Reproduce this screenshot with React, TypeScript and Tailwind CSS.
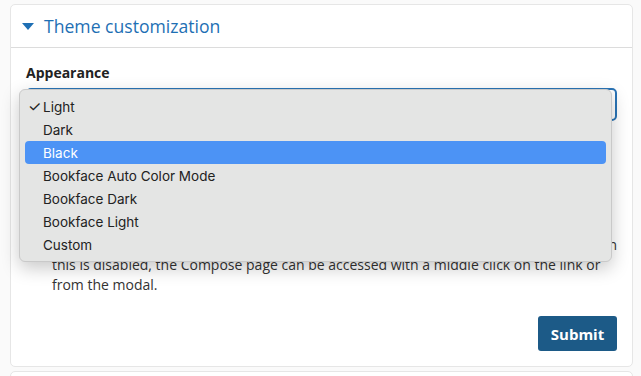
import React from 'react';

const options = ['Light', 'Dark', 'Black', 'Bookface Auto Color Mode', 'Bookface Dark', 'Bookface Light', 'Custom'];

const Dropdown = () => (
  <div className="absolute left-[-7px] top-[1px] z-10 w-[593px] rounded-[6px] border border-[#c9c9c9] bg-[#e4e5e4] py-[5px] shadow-[0_6px_18px_rgba(0,0,0,0.22)] font-['Inter',sans-serif] text-[13.5px] text-[#222]">
    {options.map((o) => {
      const active = o === 'Black';
      return (
        <div
          key={o}
          className={`mx-[5px] flex h-[23px] items-center rounded-[4px] pl-[18px] ${active ? 'bg-[#4c93f5] text-white' : ''}`}
        >
          {o === 'Light' && <span className="ml-[-15px] w-[15px] text-[15px] leading-none">✓</span>}
          {o}
        </div>
      );
    })}
  </div>
);

const Check = ({ checked }: { checked?: boolean }) => (
  <span className={`mt-[3px] h-[14px] w-[14px] shrink-0 rounded-[3px] border ${checked ? 'border-[#1e6fb4] bg-[#1e6fb4]' : 'border-[#999] bg-white'}`} />
);

export default function App() {
  return (
    <div className="min-h-[376px] w-[641px] overflow-hidden bg-[#fafafa] pt-[4px] pl-[10px] pr-[8px] font-['Open_Sans',sans-serif] text-[14px] leading-[20px] text-[#333]">
      <div className="rounded-[5px] border border-[#e6e6e6] bg-white">
        <div className="flex h-[43px] items-center gap-[10px] border-b border-[#dcdcdc] pl-[10px]">
          <svg width="12" height="8" viewBox="0 0 12 8" className="ml-[1px] mt-[1px]">
            <path d="M0 0 H12 L6 7 Z" fill="#1e6fb4" />
          </svg>
          <h2 className="text-[17.6px] text-[#1e6fb4]">Theme customization</h2>
        </div>

        <div className="px-[15px] pt-[15px] pb-[15px]">
          <label className="mb-[5px] block font-bold text-[#222]">Appearance</label>
          <div className="relative">
            <div className="flex h-[33px] items-center justify-between rounded-[5px] border-2 border-[#2a74b6] bg-white px-[10px]">
              <span>Black</span>
              <span className="text-[10px] text-[#777]">⌄</span>
            </div>
            <Dropdown />
          </div>

          <div className="mt-[20px] flex gap-[12px]">
            <Check checked />
            <div>
              <div className="font-semibold">Use sticky header</div>
              <div>Keep the page header visible while scrolling.</div>
            </div>
          </div>

          <div className="mt-[34px] flex gap-[12px]">
            <Check />
            <div className="flex-1">
              <div className="font-semibold">Open Compose in a modal</div>
              <div className="flex justify-between">
                <span>Clicking Compose opens a modal instead of the full Compose page.</span>
                <span>When</span>
              </div>
              <div>
                this is disabled, the Compose page can be accessed with a middle click on the link or
                <br />
                from the modal.
              </div>
            </div>
          </div>

          <div className="mt-[21px] flex justify-end">
            <button className="h-[35px] w-[79px] rounded-[3px] bg-[#1c5a87] text-[15px] font-bold text-white">
              Submit
            </button>
          </div>
        </div>
      </div>
      <div className="mt-[4px] h-[20px] rounded-[5px] border border-[#e6e6e6] bg-white" />
    </div>
  );
}
